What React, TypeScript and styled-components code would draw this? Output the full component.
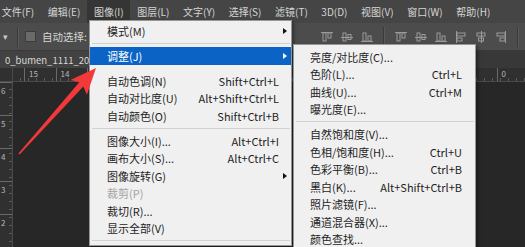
import React from 'react';
import styled, { createGlobalStyle } from 'styled-components';

const GlobalStyle = createGlobalStyle`
  html, body {
    margin: 0;
    padding: 0;
    background: #282828;
  }
  body {
    font-family: "Noto Sans CJK SC", "Noto Sans", sans-serif;
  }
`;

const menuBarItems = ['文件(F)', '编辑(E)', '图像(I)', '图层(L)', '文字(Y)', '选择(S)', '滤镜(T)', '3D(D)', '视图(V)', '窗口(W)', '帮助(H)'];

type Item =
    | { kind: 'sep'; hidden?: boolean }
    | { kind: 'item'; label: string; shortcut?: string; sub?: boolean; active?: boolean; disabled?: boolean };

const imageMenu: Item[] = [
    { kind: 'item', label: '模式(M)', sub: true },
    { kind: 'sep' },
    { kind: 'item', label: '调整(J)', sub: true, active: true },
    { kind: 'sep', hidden: true },
    { kind: 'item', label: '自动色调(N)', shortcut: 'Shift+Ctrl+L' },
    { kind: 'item', label: '自动对比度(U)', shortcut: 'Alt+Shift+Ctrl+L' },
    { kind: 'item', label: '自动颜色(O)', shortcut: 'Shift+Ctrl+B' },
    { kind: 'sep' },
    { kind: 'item', label: '图像大小(I)...', shortcut: 'Alt+Ctrl+I' },
    { kind: 'item', label: '画布大小(S)...', shortcut: 'Alt+Ctrl+C' },
    { kind: 'item', label: '图像旋转(G)', sub: true },
    { kind: 'item', label: '裁剪(P)', disabled: true },
    { kind: 'item', label: '裁切(R)...' },
    { kind: 'item', label: '显示全部(V)' },
    { kind: 'sep' },
];

const adjustMenu: Item[] = [
    { kind: 'item', label: '亮度/对比度(C)...' },
    { kind: 'item', label: '色阶(L)...', shortcut: 'Ctrl+L' },
    { kind: 'item', label: '曲线(U)...', shortcut: 'Ctrl+M' },
    { kind: 'item', label: '曝光度(E)...' },
    { kind: 'sep' },
    { kind: 'item', label: '自然饱和度(V)...' },
    { kind: 'item', label: '色相/饱和度(H)...', shortcut: 'Ctrl+U' },
    { kind: 'item', label: '色彩平衡(B)...', shortcut: 'Ctrl+B' },
    { kind: 'item', label: '黑白(K)...', shortcut: 'Alt+Shift+Ctrl+B' },
    { kind: 'item', label: '照片滤镜(F)...' },
    { kind: 'item', label: '通道混合器(X)...' },
    { kind: 'item', label: '颜色查找...' },
];

// only the labels that are not covered by the menus
const hLabels = ['15', '14', '', '', '', '', '', '', '', '', '', '', '', '', '', '0'];
const vLabels = ['6', '5', '4', '3', '2', ''];

const AlignIcon = ({ variant }: { variant: number }) => {
    const c = '#9a9a9a';
    if (variant === 0) {
        return (
            <svg width="12" height="12" viewBox="0 0 12 12">
                <line x1="0" y1="1.5" x2="12" y2="1.5" stroke={c} />
                <rect x="2" y="2" width="3" height="8" fill="none" stroke={c} />
                <rect x="7" y="2" width="3" height="5" fill="none" stroke={c} />
            </svg>
        );
    }
    if (variant === 1) {
        return (
            <svg width="12" height="12" viewBox="0 0 12 12">
                <line x1="0" y1="6.5" x2="12" y2="6.5" stroke={c} />
                <rect x="2" y="2" width="3" height="8" fill="none" stroke={c} />
                <rect x="7" y="3.5" width="3" height="5" fill="none" stroke={c} />
            </svg>
        );
    }
    if (variant === 2) {
        return (
            <svg width="12" height="12" viewBox="0 0 12 12">
                <line x1="0" y1="10.5" x2="12" y2="10.5" stroke={c} />
                <rect x="2" y="2" width="3" height="8" fill="none" stroke={c} />
                <rect x="7" y="5" width="3" height="5" fill="none" stroke={c} />
            </svg>
        );
    }
    if (variant === 3) {
        return (
            <svg width="12" height="12" viewBox="0 0 12 12">
                <line x1="1.5" y1="0" x2="1.5" y2="12" stroke={c} />
                <rect x="2" y="2" width="8" height="3" fill="none" stroke={c} />
                <rect x="2" y="7" width="5" height="3" fill="none" stroke={c} />
            </svg>
        );
    }
    if (variant === 4) {
        return (
            <svg width="12" height="12" viewBox="0 0 12 12">
                <line x1="6.5" y1="0" x2="6.5" y2="12" stroke={c} />
                <rect x="2" y="2" width="8" height="3" fill="none" stroke={c} />
                <rect x="3.5" y="7" width="5" height="3" fill="none" stroke={c} />
            </svg>
        );
    }
    return (
        <svg width="12" height="12" viewBox="0 0 12 12">
            <line x1="10.5" y1="0" x2="10.5" y2="12" stroke={c} />
            <rect x="2" y="2" width="8" height="3" fill="none" stroke={c} />
            <rect x="5" y="7" width="5" height="3" fill="none" stroke={c} />
        </svg>
    );
};

const renderItems = (items: Item[]) =>
    items.map((it, i) =>
        it.kind === 'sep' ? (
            <Separator key={i} $hidden={it.hidden} />
        ) : (
            <MenuRow key={i} $active={it.active} $disabled={it.disabled}>
                <RowLabel>{it.label}</RowLabel>
                {it.shortcut && <RowShortcut>{it.shortcut}</RowShortcut>}
                <RowArrowCell>{it.sub && <SubArrow $active={it.active} />}</RowArrowCell>
            </MenuRow>
        )
    );

export default function App() {
    return (
        <>
            <GlobalStyle />
            <Screen>
                <MenuBar>
                    {menuBarItems.map((m) => (
                        <MenuBarItem key={m} $active={m === '图像(I)'}>{m}</MenuBarItem>
                    ))}
                </MenuBar>

                <OptionsBar>
                    <ToolPreset>▾</ToolPreset>
                    <BarDivider />
                    <CheckBox />
                    <OptionText>自动选择:</OptionText>
                    <Spacer />
                    <IconGroup>
                        <AlignIcon variant={0} />
                        <AlignIcon variant={1} />
                        <AlignIcon variant={2} />
                    </IconGroup>
                    <BarDivider />
                    <IconGroup>
                        <AlignIcon variant={0} />
                        <AlignIcon variant={1} />
                        <AlignIcon variant={2} />
                    </IconGroup>
                    <IconGroup>
                        <AlignIcon variant={3} />
                        <AlignIcon variant={4} />
                        <AlignIcon variant={5} />
                    </IconGroup>
                    <BarDivider />
                </OptionsBar>

                <TabStrip>
                    <DocTab>0_bumen_1111_20</DocTab>
                </TabStrip>

                <RulerRow>
                    <RulerCorner />
                    <HRuler>
                        {hLabels.map((l, i) => (
                            <HRulerCell key={i}>{l}</HRulerCell>
                        ))}
                    </HRuler>
                </RulerRow>

                <Workspace>
                    <VRuler>
                        {vLabels.map((l, i) => (
                            <VRulerCell key={i}>{l}</VRulerCell>
                        ))}
                    </VRuler>
                    <Canvas />
                </Workspace>

                <Dropdown $left={89} $top={20} $width={203} $padTop={1} $padLeft={17} $tail={12}>
                    {renderItems(imageMenu)}
                </Dropdown>

                <Dropdown $left={293} $top={44} $width={183} $padTop={3} $padLeft={16} $tail={13}>
                    {renderItems(adjustMenu)}
                </Dropdown>

                <ArrowLayer width="525" height="247" viewBox="0 0 525 247">
                    <polygon
                        points="96,68 86.9,94.7 83.3,86.6 19.6,154.6 18.4,153.4 79.3,82.2 70.5,80.1"
                        fill="#f2393a"
                    />
                </ArrowLayer>
            </Screen>
        </>
    );
}

// Styled components

const Screen = styled.div`
    position: relative;
    width: 525px;
    height: 247px;
    overflow: hidden;
    display: flex;
    flex-direction: column;
    background: #282828;
`;

const MenuBar = styled.div`
    display: flex;
    align-items: stretch;
    height: 23px;
    margin-left: -5px;
    background: #454545;
    flex-shrink: 0;
`;

const MenuBarItem = styled.div<{ $active?: boolean }>`
    display: flex;
    align-items: center;
    padding: 0 6.8px;
    font-size: 10px;
    color: #d6d6d6;
    white-space: nowrap;
    background: ${(p) => (p.$active ? '#353535' : 'transparent')};
`;

const OptionsBar = styled.div`
    display: flex;
    align-items: center;
    height: 27px;
    padding-left: 3px;
    background: #4c4c4c;
    border-bottom: 1px solid #3a3a3a;
    flex-shrink: 0;
`;

const ToolPreset = styled.span`
    font-size: 9px;
    color: #c8c8c8;
    width: 8px;
`;

const BarDivider = styled.div`
    width: 1px;
    height: 20px;
    background: #3a3a3a;
    border-right: 1px solid #5a5a5a;
    margin: 0 6px;
`;

const CheckBox = styled.div`
    width: 9px;
    height: 9px;
    background: #6a6a6a;
    border: 1px solid #3c3c3c;
    margin-right: 6px;
`;

const OptionText = styled.span`
    font-size: 10.5px;
    color: #d6d6d6;
    white-space: nowrap;
`;

const Spacer = styled.div`
    flex: 1;
`;

const IconGroup = styled.div`
    display: flex;
    align-items: center;
    gap: 8px;
    margin: 0 4px;
`;

const TabStrip = styled.div`
    height: 17px;
    background: #383838;
    display: flex;
    align-items: stretch;
    flex-shrink: 0;
`;

const DocTab = styled.div`
    display: flex;
    align-items: center;
    padding: 0 6px 0 5px;
    background: #424242;
    color: #d8d8d8;
    font-size: 9.5px;
    white-space: nowrap;
`;

const RulerRow = styled.div`
    display: flex;
    height: 13px;
    flex-shrink: 0;
    border-bottom: 1px solid #4a4a4a;
`;

const RulerCorner = styled.div`
    width: 12px;
    background: #303030;
    border-right: 1px solid #4a4a4a;
`;

const HRuler = styled.div`
    flex: 1;
    display: flex;
    padding-left: 11px;
    background:
        repeating-linear-gradient(90deg, transparent 0 7px, #5a5a5a 7px 8px) bottom left / 100% 3px no-repeat,
        #303030;
    overflow: hidden;
`;

const HRulerCell = styled.div`
    flex: 0 0 31.5px;
    box-sizing: border-box;
    border-left: 1px solid #6a6a6a;
    padding-left: 4px;
    font-size: 8px;
    line-height: 11px;
    color: #b8b8b8;
`;

const Workspace = styled.div`
    flex: 1;
    display: flex;
    min-height: 0;
`;

const VRuler = styled.div`
    width: 12px;
    display: flex;
    flex-direction: column;
    overflow: hidden;
    background:
        repeating-linear-gradient(180deg, transparent 0 7px, #5a5a5a 7px 8px) top right / 3px 100% no-repeat,
        #303030;
    border-right: 1px solid #4a4a4a;
`;

const VRulerCell = styled.div`
    flex: 0 0 33px;
    box-sizing: border-box;
    border-top: 1px solid #6a6a6a;
    padding: 2px 0 0 1px;
    font-size: 8px;
    color: #b8b8b8;
`;

const Canvas = styled.div`
    flex: 1;
    background: #272727;
`;

const Dropdown = styled.div<{ $left: number; $top: number; $width: number; $padTop: number; $padLeft: number; $tail: number }>`
    position: absolute;
    left: ${(p) => p.$left}px;
    top: ${(p) => p.$top}px;
    width: ${(p) => p.$width}px;
    box-sizing: border-box;
    padding-top: ${(p) => p.$padTop}px;
    background: #f0f0f0;
    border: 1px solid #979797;
    box-shadow: 2px 2px 3px rgba(0, 0, 0, 0.35);
    --pad-left: ${(p) => p.$padLeft}px;
    --tail: ${(p) => p.$tail}px;
`;

const MenuRow = styled.div<{ $active?: boolean; $disabled?: boolean }>`
    display: flex;
    align-items: center;
    height: 17.5px;
    padding-left: var(--pad-left);
    font-size: 11px;
    white-space: nowrap;
    color: ${(p) => (p.$disabled ? '#a3a3a3' : p.$active ? '#ffffff' : '#1e1e1e')};
    background: ${(p) => (p.$active ? '#0b63c5' : 'transparent')};
`;

const RowLabel = styled.span`
    flex: 1;
`;

const RowShortcut = styled.span`
    text-align: right;
`;

const RowArrowCell = styled.span`
    width: var(--tail);
    display: flex;
    justify-content: center;
    align-items: center;
`;

const SubArrow = styled.span<{ $active?: boolean }>`
    width: 0;
    height: 0;
    border-top: 3px solid transparent;
    border-bottom: 3px solid transparent;
    border-left: 4px solid ${(p) => (p.$active ? '#ffffff' : '#111111')};
`;

const Separator = styled.div<{ $hidden?: boolean }>`
    height: 7.5px;
    margin: 0 1px 0 2px;
    background: ${(p) =>
        p.$hidden
            ? 'transparent'
            : 'linear-gradient(#d2d2d2, #d2d2d2) center / 100% 1px no-repeat'};
`;

const ArrowLayer = styled.svg`
    position: absolute;
    left: 0;
    top: 0;
    pointer-events: none;
`;
